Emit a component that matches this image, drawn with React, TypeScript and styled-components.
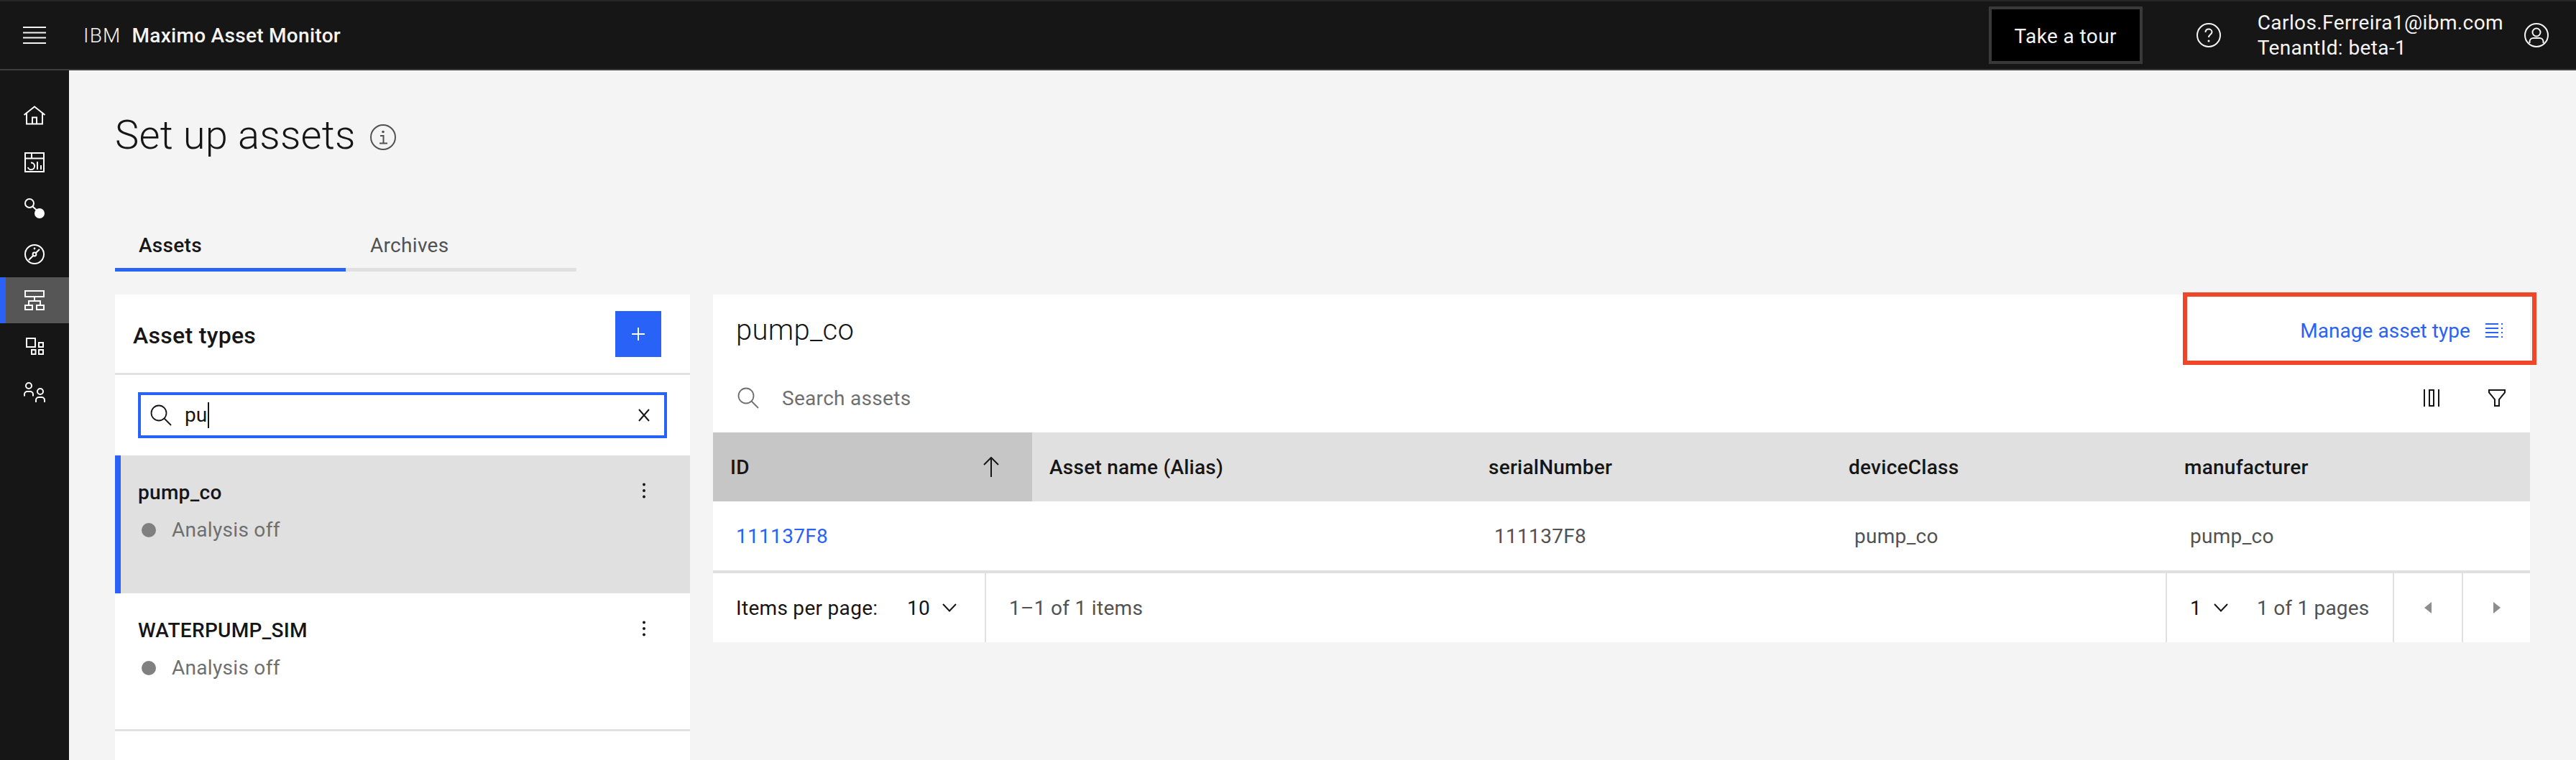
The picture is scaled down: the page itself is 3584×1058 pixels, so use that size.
import React from 'react';
import styled, { createGlobalStyle } from 'styled-components';

const BLUE = '#2962f6';

const GlobalStyle = createGlobalStyle`
  html, body {
    margin: 0;
    height: 100%;
    overflow: hidden;
    background: #f4f4f4;
    font-family: 'Roboto', 'Liberation Sans', sans-serif;
    font-size: 28px;
    color: #161616;
  }
`;

const Page = styled.div`
  display: flex;
  flex-direction: column;
  width: 3584px;
  height: 1058px;
`;

const Header = styled.header`
  display: flex;
  align-items: center;
  box-sizing: border-box;
  height: 98px;
  flex-shrink: 0;
  padding: 0 38px 0 32px;
  background: #161616;
  border-top: 2px solid #262626;
  border-bottom: 2px solid #3d3d3d;
  color: #f4f4f4;
`;

const Brand = styled.div`
  display: flex;
  gap: 15px;
  margin-left: 52px;
  letter-spacing: 0.3px;
`;

const BrandIbm = styled.span`
  font-weight: 300;
  letter-spacing: 1.2px;
`;

const BrandName = styled.span`
  font-weight: 500;
`;

const TourButton = styled.button`
  box-sizing: border-box;
  width: 214px;
  height: 80px;
  margin-left: auto;
  padding: 2px 0 0;
  background: #000;
  border: 4px solid #393939;
  color: #f4f4f4;
  font: 400 28px 'Roboto', sans-serif;
  letter-spacing: 0.4px;
`;

const HeaderIcon = styled.div<{ $ml: number }>`
  display: flex;
  margin-left: ${(p) => p.$ml}px;
`;

const UserInfo = styled.div`
  margin-left: 51px;
  line-height: 35px;
  letter-spacing: 0.4px;
`;

const Body = styled.div`
  display: flex;
  flex: 1;
  min-height: 0;
`;

const Rail = styled.nav`
  display: flex;
  flex-direction: column;
  width: 96px;
  flex-shrink: 0;
  padding-top: 32px;
  box-sizing: border-box;
  background: #161616;
`;

const RailItem = styled.div<{ $active?: boolean }>`
  display: flex;
  align-items: center;
  justify-content: center;
  height: 64px;
  color: #fff;
  background: ${(p) => (p.$active ? '#565656' : 'transparent')};
  box-shadow: ${(p) => (p.$active ? `inset 8px 0 0 ${BLUE}` : 'none')};
`;

const Main = styled.main`
  display: flex;
  flex-direction: column;
  flex: 1;
  min-width: 0;
  padding: 0 64px;
`;

const TitleRow = styled.div`
  display: flex;
  align-items: center;
  gap: 20px;
  height: 72px;
  margin-top: 54px;
`;

const PageTitle = styled.h1`
  margin: 0;
  font-size: 56px;
  font-weight: 300;
  line-height: 72px;
  letter-spacing: 0.25px;
`;

const InfoIcon = styled.div`
  display: flex;
  margin-top: 6px;
  color: #525252;
`;

const Tabs = styled.div`
  display: flex;
  margin-top: 94px;
`;

const Tab = styled.div<{ $active?: boolean }>`
  box-sizing: border-box;
  width: 321px;
  height: 60px;
  padding: 4px 0 0 ${(p) => (p.$active ? 33 : 34)}px;
  line-height: 40px;
  font-weight: ${(p) => (p.$active ? 500 : 400)};
  color: ${(p) => (p.$active ? '#161616' : '#525252')};
  border-bottom: 5px solid ${(p) => (p.$active ? BLUE : '#e0e0e0')};
  letter-spacing: 0.3px;
`;

const Content = styled.div`
  display: flex;
  flex: 1;
  min-height: 0;
  gap: 32px;
  margin-top: 32px;
`;

const LeftPanel = styled.section`
  display: flex;
  flex-direction: column;
  width: 800px;
  flex-shrink: 0;
  background: #fff;
`;

const LeftHead = styled.div`
  display: flex;
  align-items: center;
  justify-content: space-between;
  box-sizing: border-box;
  height: 112px;
  padding: 0 40px 0 25px;
  border-bottom: 3px solid #e0e0e0;
`;

const LeftTitle = styled.h2`
  margin: 4px 0 0;
  font-size: 32px;
  font-weight: 500;
  letter-spacing: 0.3px;
`;

const AddButton = styled.button`
  display: flex;
  align-items: center;
  justify-content: center;
  width: 64px;
  height: 64px;
  padding: 0;
  border: 0;
  background: ${BLUE};
  color: #fff;
`;

const SearchBox = styled.div`
  display: flex;
  align-items: center;
  box-sizing: border-box;
  width: 736px;
  height: 64px;
  margin: 24px 32px;
  padding: 0 20px 0 13px;
  border: 4px solid ${BLUE};
`;

const SearchValue = styled.span`
  margin-left: 18px;
  padding-right: 1px;
  line-height: 36px;
  border-right: 2px solid #161616;
  flex-shrink: 0;
`;

const ClearIcon = styled.div`
  display: flex;
  margin-left: auto;
`;

const TypeItem = styled.div<{ $selected?: boolean }>`
  display: flex;
  justify-content: space-between;
  box-sizing: border-box;
  height: 192px;
  padding: 30px 48px 0 ${(p) => (p.$selected ? 24 : 32)}px;
  background: ${(p) => (p.$selected ? '#e0e0e0' : '#fff')};
  border-left: ${(p) => (p.$selected ? `8px solid ${BLUE}` : '0')};
  border-bottom: ${(p) => (p.$selected ? '0' : '3px solid #e0e0e0')};
`;

const TypeName = styled.div`
  font-weight: 500;
  line-height: 44px;
  letter-spacing: 0.3px;
`;

const TypeStatus = styled.div`
  display: flex;
  align-items: center;
  gap: 22px;
  margin-top: 8px;
  padding-left: 5px;
  color: #6f6f6f;
  line-height: 44px;
  letter-spacing: 0.3px;
`;

const StatusDot = styled.span`
  width: 20px;
  height: 20px;
  border-radius: 50%;
  background: #808080;
`;

const Kebab = styled.div`
  display: flex;
  width: 32px;
  height: 32px;
  margin-top: 3px;
  color: #161616;
`;

const RightPanel = styled.section`
  position: relative;
  flex: 1;
  min-width: 0;
  align-self: flex-start;
  background: #fff;
`;

const Highlight = styled.div`
  position: absolute;
  top: -3px;
  right: -9px;
  box-sizing: border-box;
  width: 492px;
  height: 101px;
  border: 6px solid #f04528;
`;

const RightHead = styled.div`
  display: flex;
  align-items: center;
  justify-content: space-between;
  box-sizing: border-box;
  height: 100px;
  padding: 0 38px 0 32px;
`;

const AssetTitle = styled.h2`
  margin: 0 0 2px;
  font-size: 40px;
  font-weight: 300;
  letter-spacing: 0.3px;
`;

const ManageLink = styled.a`
  display: flex;
  align-items: center;
  gap: 21px;
  color: ${BLUE};
  letter-spacing: 0.05px;
`;

const SearchRow = styled.div`
  display: flex;
  align-items: center;
  box-sizing: border-box;
  height: 92px;
  padding: 0 34px 4px 34px;
  color: #6f6f6f;
`;

const SearchPlaceholder = styled.span`
  margin-left: 32px;
  letter-spacing: 0.3px;
`;

const ToolIcon = styled.div<{ $ml: string }>`
  display: flex;
  margin-left: ${(p) => p.$ml};
  color: #161616;
`;

const COLUMNS = '444px 611px 501px 467px 505px';

const HeadRow = styled.div`
  display: grid;
  grid-template-columns: ${COLUMNS};
  height: 96px;
  background: #e0e0e0;
`;

const HeadCell = styled.div<{ $sorted?: boolean }>`
  display: flex;
  align-items: center;
  justify-content: space-between;
  padding: 0 46px 0 24px;
  font-weight: 500;
  background: ${(p) => (p.$sorted ? '#c6c6c6' : 'transparent')};
  letter-spacing: 0.25px;
`;

const BodyRow = styled.div`
  display: grid;
  grid-template-columns: ${COLUMNS};
  box-sizing: border-box;
  height: 100px;
  border-bottom: 4px solid #e0e0e0;
`;

const BodyCell = styled.div`
  display: flex;
  align-items: center;
  padding-left: 32px;
  color: #525252;
  letter-spacing: 0.3px;
`;

const IdLink = styled.a`
  color: ${BLUE};
`;

const Pagination = styled.div`
  display: flex;
  height: 96px;
  letter-spacing: 0.3px;
`;

const PageSection = styled.div<{ $grow?: boolean; $w?: number; $plain?: boolean }>`
  display: flex;
  align-items: center;
  box-sizing: border-box;
  flex: ${(p) => (p.$grow ? '1' : 'none')};
  width: ${(p) => (p.$w ? `${p.$w}px` : 'auto')};
  padding-left: 32px;
  border-right: ${(p) => (p.$plain ? '0' : '2px solid #e0e0e0')};
`;

const PageLabel = styled.span`
  width: 238px;
`;

const SelectValue = styled.span`
  margin-right: 17px;
`;

const MutedText = styled.span`
  color: #525252;
`;

const PageCount = styled(MutedText)`
  margin-left: 40px;
  letter-spacing: 0.2px;
`;

const PageNav = styled.div<{ $w: number }>`
  display: flex;
  align-items: center;
  justify-content: center;
  box-sizing: border-box;
  width: ${(p) => p.$w}px;
  color: #8d8d8d;
  border-left: 2px solid #e0e0e0;
`;

const Svg = ({ children }: { children: React.ReactNode }) => (
  <svg width={32} height={32} viewBox="0 0 32 32" fill="none" stroke="currentColor" strokeWidth={2}>
    {children}
  </svg>
);

const MenuIcon = () => (
  <svg width="32" height="24" viewBox="0 0 32 24" fill="none" stroke="#f4f4f4" strokeWidth="1.8">
    <path d="M0 1h32M0 8.5h32M0 15.5h32M0 23h32" />
  </svg>
);

const HomeIcon = () => (
  <Svg>
    <path d="M1.500 14 16 2.500 30.500 14" />
    <path d="M5 11v15.500h22V11" />
    <path d="M13 26.500V17.500h6v9" />
  </Svg>
);

const DashboardIcon = () => (
  <Svg>
    <path d="M3 3h26v26H3zM3 10.500h26M12 3v7.500" />
    <path d="M11 16.500a4.800 4.800 0 1 1-4.200 6.500" />
    <path d="M20 15v11M25 20v6" />
  </Svg>
);

const NodesIcon = () => (
  <Svg>
    <circle cx="9" cy="9" r="6" />
    <path d="M13.500 13.500 19 18.500" />
    <circle cx="23" cy="23" r="7" fill="currentColor" stroke="none" />
  </Svg>
);

const CompassIcon = () => (
  <Svg>
    <circle cx="16" cy="16" r="13" />
    <circle cx="16" cy="16" r="2.400" />
    <path d="M8 24 14.300 17.700M17.700 14.300 23 9" />
    <circle cx="16" cy="8" r="1.400" fill="currentColor" stroke="none" />
  </Svg>
);

const OrgIcon = () => (
  <Svg>
    <path d="M3 3h26v8H3zM3 23h10v6H3zM19 23h10v6H19zM16 11v6M8 23v-6h16v6" />
  </Svg>
);

const GridIcon = () => (
  <Svg>
    <path d="M5 5h12v12H5zM22 11h6v6h-6zM12 21h5.500v6H12zM22 21h6v6h-6z" />
  </Svg>
);

const UsersIcon = () => (
  <Svg>
    <circle cx="8" cy="7" r="4" />
    <path d="M2 21.500V19a4 4 0 0 1 4-4h4a4 4 0 0 1 4 4v2.500" />
    <circle cx="24" cy="15" r="4" />
    <path d="M18 30v-3a4 4 0 0 1 4-4h4a4 4 0 0 1 4 4v3" />
  </Svg>
);

const HelpIcon = () => (
  <svg width="34" height="34" viewBox="0 0 34 34" fill="none" stroke="#f4f4f4" strokeWidth="2">
    <circle cx="17" cy="17" r="16" />
    <path d="M12.500 13c0-3 2-4.500 4.500-4.500s4.500 1.700 4.500 4c0 3.500-4.500 3.500-4.500 7.500" />
    <circle cx="17" cy="25" r="1.500" fill="#f4f4f4" stroke="none" />
  </svg>
);

const UserIcon = () => (
  <svg width="34" height="36" viewBox="0 0 34 36" fill="none" stroke="#f4f4f4" strokeWidth="2">
    <circle cx="17" cy="18" r="16" />
    <circle cx="17" cy="14" r="5.500" />
    <path d="M7.500 29v-2a5 5 0 0 1 5-5h9a5 5 0 0 1 5 5v2" />
  </svg>
);

const InfoGlyph = () => (
  <svg width="36" height="36" viewBox="0 0 36 36" fill="none" stroke="currentColor" strokeWidth="2">
    <circle cx="18" cy="18" r="17" />
    <path d="M14 16h4.500v10M13 26.500h11" />
    <circle cx="18" cy="10.500" r="1.800" fill="currentColor" stroke="none" />
  </svg>
);

const PlusIcon = () => (
  <svg width="18" height="18" viewBox="0 0 18 18" stroke="#fff" strokeWidth="2">
    <path d="M9 0v18M0 9h18" />
  </svg>
);

const SearchGlyph = () => (
  <svg width={30} height={30} viewBox="0 0 30 30" fill="none" stroke="currentColor" strokeWidth="1.800">
    <circle cx="12" cy="12" r="10.500" />
    <path d="M19.500 19.500 29 29" />
  </svg>
);

const CloseIcon = () => (
  <svg width="16" height="18" viewBox="0 0 16 18" stroke="#161616" strokeWidth="2">
    <path d="M1 1l14 16M15 1 1 17" />
  </svg>
);

const KebabIcon = () => (
  <svg width="32" height="32" viewBox="0 0 32 32" fill="currentColor">
    <circle cx="16" cy="7.500" r="2" />
    <circle cx="16" cy="16" r="2" />
    <circle cx="16" cy="24.500" r="2" />
  </svg>
);

const ManageIcon = () => (
  <svg width="24" height="20" viewBox="0 0 24 20" stroke="currentColor" strokeWidth="2" fill="none">
    <path d="M0 1h18M0 7h18M0 13h18M0 19h18" />
    <path d="M23 0v2M23 6v2M23 12v2M23 18v2" />
  </svg>
);

const ColumnsIcon = () => (
  <svg width="22" height="24" viewBox="0 0 22 24" stroke="currentColor" strokeWidth="2" fill="none">
    <path d="M1 0v24M21 0v24M8 1h6v22H8z" />
  </svg>
);

const FilterIcon = () => (
  <svg width="24" height="24" viewBox="0 0 24 24" stroke="currentColor" strokeWidth="2" fill="none">
    <path d="M1 1h22v3.500L15 14v9H9v-9L1 4.500z" />
  </svg>
);

const ArrowUpIcon = () => (
  <svg width="22" height="28" viewBox="0 0 22 28" stroke="#161616" strokeWidth="2" fill="none">
    <path d="M11 1v27M1 11 11 1l10 10" />
  </svg>
);

const ChevronIcon = () => (
  <svg width="20" height="12" viewBox="0 0 20 12" stroke="#161616" strokeWidth="2" fill="none">
    <path d="M1 1l9 9.500L19 1" />
  </svg>
);

const CaretIcon = ({ dir }: { dir: 'left' | 'right' }) => (
  <svg width="10" height="16" viewBox="0 0 10 16" fill="currentColor">
    <path d={dir === 'left' ? 'M10 0v16L0 8z' : 'M0 0v16l10-8z'} />
  </svg>
);

const railIcons = [HomeIcon, DashboardIcon, NodesIcon, CompassIcon, OrgIcon, GridIcon, UsersIcon];

function AssetType({ name, selected }: { name: string; selected?: boolean }) {
  return (
    <TypeItem $selected={selected}>
      <div>
        <TypeName>{name}</TypeName>
        <TypeStatus>
          <StatusDot />
          Analysis off
        </TypeStatus>
      </div>
      <Kebab>
        <KebabIcon />
      </Kebab>
    </TypeItem>
  );
}

export default function App() {
  return (
    <Page>
      <GlobalStyle />
      <Header>
        <MenuIcon />
        <Brand>
          <BrandIbm>IBM</BrandIbm>
          <BrandName>Maximo Asset Monitor</BrandName>
        </Brand>
        <TourButton>Take a tour</TourButton>
        <HeaderIcon $ml={75}>
          <HelpIcon />
        </HeaderIcon>
        <UserInfo>
          Carlos.Ferreira1@ibm.com
          <br />
          TenantId: beta-1
        </UserInfo>
        <HeaderIcon $ml={29}>
          <UserIcon />
        </HeaderIcon>
      </Header>
      <Body>
        <Rail>
          {railIcons.map((Icon, i) => (
            <RailItem key={i} $active={i === 4}>
              <Icon />
            </RailItem>
          ))}
        </Rail>
        <Main>
          <TitleRow>
            <PageTitle>Set up assets</PageTitle>
            <InfoIcon>
              <InfoGlyph />
            </InfoIcon>
          </TitleRow>
          <Tabs>
            <Tab $active>Assets</Tab>
            <Tab>Archives</Tab>
          </Tabs>
          <Content>
            <LeftPanel>
              <LeftHead>
                <LeftTitle>Asset types</LeftTitle>
                <AddButton>
                  <PlusIcon />
                </AddButton>
              </LeftHead>
              <SearchBox>
                <SearchGlyph />
                <SearchValue>pu</SearchValue>
                <ClearIcon>
                  <CloseIcon />
                </ClearIcon>
              </SearchBox>
              <AssetType name="pump_co" selected />
              <AssetType name="WATERPUMP_SIM" />
            </LeftPanel>
            <RightPanel>
              <RightHead>
                <AssetTitle>pump_co</AssetTitle>
                <ManageLink>
                  Manage asset type
                  <ManageIcon />
                </ManageLink>
              </RightHead>
              <Highlight />
              <SearchRow>
                <SearchGlyph />
                <SearchPlaceholder>Search assets</SearchPlaceholder>
                <ToolIcon $ml="auto">
                  <ColumnsIcon />
                </ToolIcon>
                <ToolIcon $ml="68px">
                  <FilterIcon />
                </ToolIcon>
              </SearchRow>
              <HeadRow>
                <HeadCell $sorted>
                  ID
                  <ArrowUpIcon />
                </HeadCell>
                <HeadCell>Asset name (Alias)</HeadCell>
                <HeadCell>serialNumber</HeadCell>
                <HeadCell>deviceClass</HeadCell>
                <HeadCell>manufacturer</HeadCell>
              </HeadRow>
              <BodyRow>
                <BodyCell>
                  <IdLink>111137F8</IdLink>
                </BodyCell>
                <BodyCell />
                <BodyCell>111137F8</BodyCell>
                <BodyCell>pump_co</BodyCell>
                <BodyCell>pump_co</BodyCell>
              </BodyRow>
              <Pagination>
                <PageSection $w={380}>
                  <PageLabel>Items per page:</PageLabel>
                  <SelectValue>10</SelectValue>
                  <ChevronIcon />
                </PageSection>
                <PageSection $grow>
                  <MutedText>1–1 of 1 items</MutedText>
                </PageSection>
                <PageSection $w={314} $plain>
                  <SelectValue>1</SelectValue>
                  <ChevronIcon />
                  <PageCount>1 of 1 pages</PageCount>
                </PageSection>
                <PageNav $w={96}>
                  <CaretIcon dir="left" />
                </PageNav>
                <PageNav $w={95}>
                  <CaretIcon dir="right" />
                </PageNav>
              </Pagination>
            </RightPanel>
          </Content>
        </Main>
      </Body>
    </Page>
  );
}
